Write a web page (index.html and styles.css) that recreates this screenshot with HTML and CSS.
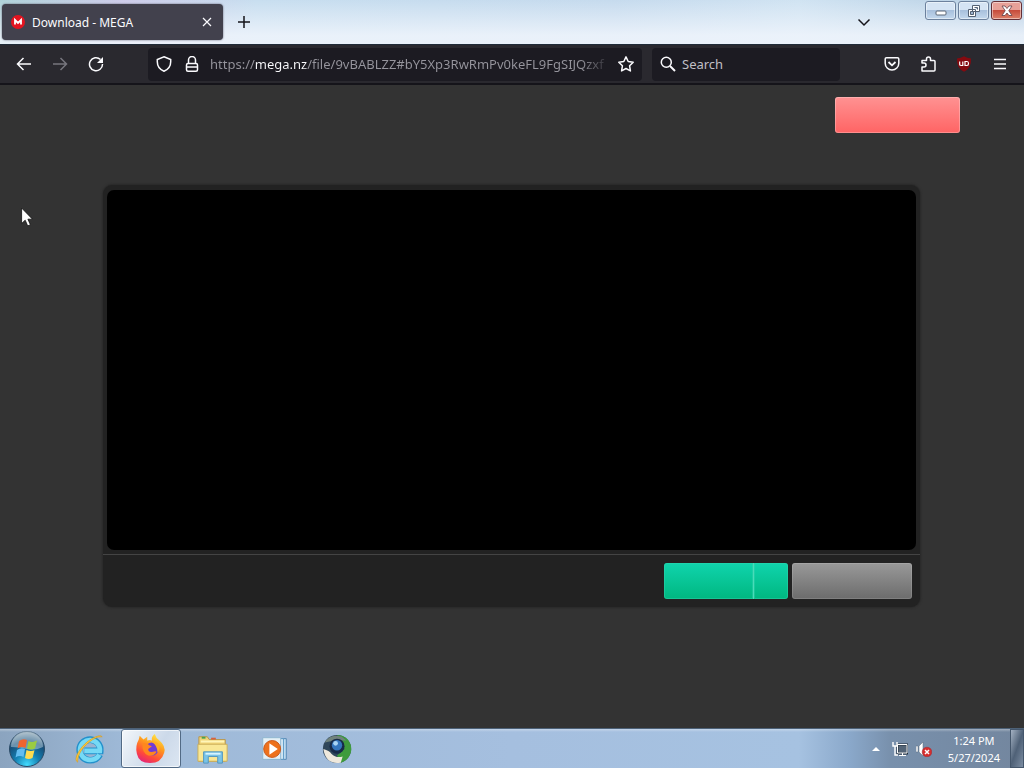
FILE: index.html
```html
<!DOCTYPE html>
<html lang="en">
<head>
<meta charset="utf-8">
<title>Download - MEGA</title>
<link rel="stylesheet" href="styles.css">
</head>
<body>
<header class="titlebar">
  <div class="tab">
    <svg class="favicon" viewBox="0 0 16 16" aria-hidden="true"><circle cx="8" cy="8" r="7" fill="#e31420"/><path d="M5 10.500V6l3 3 3-3v4.500" fill="none" stroke="#fff" stroke-width="1.800"/></svg>
    <span class="tab-title">Download - MEGA</span>
    <button class="plain tab-close" aria-label="Close tab"><svg viewBox="0 0 16 16" class="icon"><path d="M4 4l8 8M12 4l-8 8"/></svg></button>
  </div>
  <button class="plain new-tab" aria-label="New tab"><svg viewBox="0 0 16 16" class="icon dark"><path d="M8 2v12M2 8h12"/></svg></button>
  <button class="plain all-tabs" aria-label="List all tabs"><svg viewBox="0 0 16 16" class="icon dark"><path d="M2.500 5.500L8 11l5.500-5.500"/></svg></button>
  <div class="window-controls">
    <button class="win" aria-label="Minimize"><svg viewBox="0 0 16 12"><rect x="3" y="6" width="10" height="4" rx="1" fill="#fff" stroke="#5b6676"/></svg></button>
    <button class="win" aria-label="Restore"><svg viewBox="0 0 16 12"><path d="M6.500.5h7v6h-7zM2.500 4.500h7v7h-7z" fill="#fff" stroke="#536072"/><path d="M8.500 2.500h3v2M4.500 6.500h3v3h-3z" fill="#9cb4d0" stroke="#536072"/></svg></button>
    <button class="win win-close" aria-label="Close"><svg viewBox="0 0 16 12"><path d="M3 1h3l2 2.500L10 1h3L9.800 5.700 13 10.500h-3L8 8l-2 2.500H3l3.200-4.800z" fill="#fff" stroke="#624047" stroke-width=".8"/></svg></button>
  </div>
</header>

<nav class="toolbar">
  <div class="nav-buttons">
    <button class="plain" aria-label="Back"><svg viewBox="0 0 16 16" class="icon"><path d="M15 8H2M7.500 2L1.500 8l6 6"/></svg></button>
    <button class="plain dim" aria-label="Forward"><svg viewBox="0 0 16 16" class="icon"><path d="M1 8h13M8.500 2l6 6-6 6"/></svg></button>
    <button class="plain" aria-label="Reload"><svg viewBox="0 0 16 16" class="icon"><path d="M12.500 3.500A6.500 6.500 0 1 0 14.500 8"/><path d="M15 1v6H9z" fill="currentColor" stroke="none"/></svg></button>
  </div>
  <div class="field address">
    <svg viewBox="0 0 16 16" class="icon" aria-hidden="true"><path d="M8 .8l6.700 2.700v2.300C14.700 10 12 13.600 8 15.200 4 13.600 1.300 10 1.300 5.800V3.500z"/></svg>
    <svg viewBox="0 0 16 16" class="icon" aria-hidden="true"><rect x="2.500" y="7.500" width="11" height="7.700" rx="1.500"/><path d="M4.500 7.500V4a3.500 3.500 0 0 1 7 0v3.500M3 11h10"/></svg>
    <input class="url" type="text" aria-label="Address" value="https://mega.nz/file/9vBABLZZ#bY5Xp3RwRmPv0keFL9FgSIJQzxf">
    <button class="plain" aria-label="Bookmark this page"><svg viewBox="0 0 16 16" class="icon"><path d="M8 .9l2.200 4.600 5 .7-3.600 3.600.8 5.100L8 12.500l-4.400 2.400.8-5.100L.8 6.200l5-.7z" stroke-linejoin="round"/></svg></button>
  </div>
  <div class="field search-field">
    <svg viewBox="0 0 16 16" class="icon" aria-hidden="true"><circle cx="6.300" cy="6.300" r="5"/><path d="M10 10l5 5" stroke-width="2"/></svg>
    <input class="search" type="text" aria-label="Search" placeholder="Search">
  </div>
  <div class="tools">
    <button class="plain" aria-label="Save to Pocket"><svg viewBox="0 0 16 16" class="icon"><path d="M2.500 1.800h11q1.300 0 1.300 1.300v4.100a6.800 6.800 0 0 1-13.600 0V3.100q0-1.300 1.300-1.300z"/><path d="M4.500 6L8 9.300 11.500 6" stroke-width="1.800"/></svg></button>
    <button class="plain" aria-label="Extensions"><svg viewBox="0 0 16 16" class="icon"><path d="M2 15v-4h2a2 2 0 0 0 0-4H2V4.500h4.500V3a2 2 0 0 1 4 0v1.500H14q1 0 1 1V14q0 1-1 1z" stroke-linejoin="round"/></svg></button>
    <button class="plain" aria-label="uBlock Origin"><svg viewBox="0 0 16 16" class="icon"><path d="M8 .3q3 2 7 2.200Q15.500 12 8 15.800.5 12 1 2.500 5 2.300 8 .3z" fill="#850a10" stroke="none"/><path d="M3.700 5.500v3q0 1 1.500 1h1.600v-4M9 5.500h2q1.500 0 1.500 2t-1.500 2H9z" stroke="#fff" stroke-width="1.200"/></svg></button>
    <button class="plain" aria-label="Open menu"><svg viewBox="0 0 16 16" class="icon"><path d="M2 3.500h12M2 8h12M2 12.500h12"/></svg></button>
  </div>
</nav>

<main class="page">
  <div class="page-top"><button class="action red" aria-label="Create account"></button></div>
  <section class="viewer">
    <div class="preview"></div>
    <div class="viewer-actions">
      <div class="split">
        <button class="action green" aria-label="Download"></button>
        <button class="action green more" aria-label="Download options"></button>
      </div>
      <button class="action grey" aria-label="Import"></button>
    </div>
  </section>
  <svg class="cursor" viewBox="0 0 12 20" aria-hidden="true"><path d="M.6 1v15.500l3.600-3.300 2.500 5.700 2.700-1.200-2.500-5.500h4.600z" fill="#fff" stroke="#111" stroke-width=".8"/></svg>
</main>

<footer class="taskbar">
  <div class="apps">
    <button class="plain app start" aria-label="Start"><svg viewBox="0 0 38 38">
      <defs><radialGradient id="orb" cx=".5" cy=".95" r=".9"><stop offset="0" stop-color="#43dcff"/><stop offset=".4" stop-color="#147fb1"/><stop offset=".75" stop-color="#174e78"/><stop offset="1" stop-color="#869eae"/></radialGradient></defs>
      <circle cx="19" cy="19" r="17.500" fill="url(#orb)" stroke="#2a4a66"/><path d="M3 17a16 16 0 0 1 32 0q-8 4-16 2T3 17z" fill="#d3e3ec" opacity=".45"/>
      <path d="M11 11q4-3 8-1l-1.500 8q-4-2-8 .5z" fill="#ef6530"/><path d="M20.500 11q4 2 8.500-.5l-2 8q-4 2-8 0z" fill="#9acb42"/><path d="M9 20q4-3 8-1l-1.500 8q-4-2-8 .5z" fill="#62bdf0"/><path d="M18.500 20q4 2 8 .3l-2 7.700q-4 2-7.500 0z" fill="#ffdc4f"/></svg></button>
    <button class="plain app" aria-label="Internet Explorer"><svg viewBox="0 0 34 34">
      <path d="M28.500 23q-3 6-10.500 6A11 11 0 1 1 29 19H12" fill="none" stroke="#2291cc" stroke-width="7"/><path d="M28 23q-3 5.500-10 5.500A10.500 10.500 0 1 1 28.500 19H12" fill="none" stroke="#75d9f5" stroke-width="5"/><path d="M5 31C-1 28 9 12 20 6q9-5 11-2-4-1-10 3C11 13 4 24 5 31z" fill="#ffc936" stroke="#d59b24" stroke-width=".7"/></svg></button>
    <button class="plain app active" aria-label="Firefox"><svg viewBox="0 0 34 34">
      <defs><linearGradient id="fox" x1=".8" y1="0" x2=".3" y2="1"><stop offset="0" stop-color="#fff04a"/><stop offset=".4" stop-color="#ff9a1e"/><stop offset=".75" stop-color="#ff493b"/><stop offset="1" stop-color="#e32578"/></linearGradient></defs>
      <path d="M4 7l1-4 4 4 4-3 0 4q3-1 5 0-1-4 3-7 1 4 5 7 7 6 5 13-3 11-15 11T2 22Q0 14 4 7z" fill="url(#fox)"/><circle cx="18" cy="17" r="7" fill="#713cd5"/><path d="M8 11q5-1 7 2l3 1-4 3q0 4 5 3 3-1 4 0-3 5-9 4-7-3-6-13z" fill="#ff871f"/><path d="M17 9q9-1 9 8l-2 4q0-8-7-12z" fill="#ffae22"/></svg></button>
    <button class="plain app" aria-label="Windows Explorer"><svg viewBox="0 0 34 34">
      <path d="M2 4h9l2 3h17v23H2z" fill="#f0d478" stroke="#b8944a"/><path d="M5 5h4" stroke="#48a250" stroke-width="2"/><path d="M15 6h5" stroke="#d8623c" stroke-width="2"/><path d="M4 9h25M4 13h25" stroke="#fff5b8" stroke-width="2"/><path d="M1 12h31v18H1z" fill="#f9e795" stroke="#cbad57"/><path d="M7 32V20h20v12h-5v-7H12v7z" fill="#79c3e7" stroke="#5195be"/><path d="M9 22h16" stroke="#d6f4ff" stroke-width="2"/></svg></button>
    <button class="plain app" aria-label="Windows Media Player"><svg viewBox="0 0 34 34">
      <path d="M15 6h14v22H15z" fill="#bcdaf0" stroke="#5286b2"/><path d="M9 6h17v22H9z" fill="#d4e8f5" stroke="#5c98c4"/><path d="M4 5h19v23H4z" fill="#e4f0f6" stroke="#8db5cf"/><circle cx="14" cy="17" r="9" fill="#ed711c" stroke="#c8571b"/><path d="M11 11l9 6-9 6z" fill="#fff"/></svg></button>
    <button class="plain app" aria-label="Browser"><svg viewBox="0 0 34 34">
      <circle cx="17" cy="17" r="15" fill="#30475a"/><path d="M17 2a15 15 0 0 1 4 29.500L17 24l8-7-4-10z" fill="#3e9b3c"/><path d="M2.500 17Q9 19 11 22q5 5 12 3l-2 6.500Q5 34 2.500 17z" fill="#eee8dc"/><path d="M4 10Q10 0 22 4l5 4H14z" fill="#70827c"/><circle cx="17" cy="14" r="8" fill="#182b48"/><circle cx="17" cy="13" r="5.500" fill="#3475bd"/><circle cx="15.500" cy="11" r="2.500" fill="#a9d4f4"/></svg></button>
  </div>
  <div class="tray">
    <button class="plain tray-item" aria-label="Show hidden icons"><svg viewBox="0 0 16 16"><path d="M4 10l4-4 4 4z" fill="#fff"/></svg></button>
    <button class="plain tray-item" aria-label="Network"><svg viewBox="0 0 16 16"><path d="M5.500 3.500h10v9h-10z" fill="#536477" stroke="#222f3d" stroke-width="2"/><path d="M5.500 3.500h9.500v8.500H5.500zM7 14.500h7M10.500 12v2" fill="none" stroke="#fff"/><path d="M1 1v4h4V1M3 5v9h3" fill="none" stroke="#fff" stroke-width="1.400"/></svg></button>
    <button class="plain tray-item" aria-label="Volume muted"><svg viewBox="0 0 16 16"><path d="M0 5h2v6H0zM3 5l4-4v14l-4-4z" fill="#fff" stroke="#596a7c" stroke-width=".5"/><circle cx="11" cy="11" r="4.800" fill="#d62e2e" stroke="#a52630" stroke-width=".5"/><path d="M9 9l4 4M13 9l-4 4" stroke="#fff" stroke-width="1.500"/></svg></button>
    <div class="clock"><time>1:24 PM</time><time>5/27/2024</time></div>
    <button class="plain show-desktop" aria-label="Show desktop"></button>
  </div>
</footer>
</body>
</html>
```
FILE: styles.css
```css
* { box-sizing: border-box; }
body {
  margin: 0;
  min-height: 100vh;
  display: flex;
  flex-direction: column;
  font-family: "Noto Sans", "Open Sans", sans-serif;
  background: #333;
}
button, input { font: inherit; padding: 0; border: 0; margin: 0; }
svg { display: block; }
.plain { background: none; color: inherit; display: grid; place-items: center; }
.icon { width: 16px; height: 16px; flex: none; fill: none; stroke: currentColor; stroke-width: 1.5; }
.dark { color: #15141a; }

.titlebar {
  height: 44px;
  display: flex;
  align-items: center;
  background: linear-gradient(#ffffff22, #f0f5fcdd 80%), linear-gradient(90deg, #a3ccd4 0, #c6c4e6 12%, #bfd9ed 25%, #bdd5eb 60%, #c9dff0 78%, #aac6de);
}
.tab {
  width: 221px;
  height: 36px;
  margin-left: 2px;
  padding: 0 8px;
  display: flex;
  align-items: center;
  gap: 6px;
  border-radius: 4px;
  background: #42414d;
  color: #fbfbfe;
  font-size: 12px;
  box-shadow: 0 0 2px #555469;
}
.favicon { width: 16px; height: 16px; }
.tab-title { flex: 1; }
.tab-close .icon { stroke-width: 1.2; }
.new-tab { width: 42px; height: 36px; }
.all-tabs { width: 36px; height: 36px; margin-left: auto; margin-right: 43px; }
.window-controls { align-self: flex-start; display: flex; gap: 2px; padding: 1px 2px 0 0; }
.win {
  width: 31px;
  height: 19px;
  display: grid;
  place-items: center;
  border: 1px solid #6c819d;
  border-radius: 3px;
  background: linear-gradient(#d5e4f4 48%, #a8c0dc 50%, #c3d8ed);
  box-shadow: inset 0 0 0 1px #ffffff77;
}
.win svg { width: 16px; height: 12px; }
.win-close { border-color: #642f36; background: linear-gradient(#e7a198 45%, #c64c3c 50%, #dc8069); }

.toolbar {
  height: 41px;
  display: flex;
  align-items: center;
  padding: 0 6px;
  background: #2a292f;
  border-top: 1px solid #202b38;
  border-bottom: 2px solid #15141a;
  color: #fbfbfe;
}
.nav-buttons, .tools { display: flex; }
.nav-buttons .plain, .tools .plain { width: 36px; height: 32px; }
.nav-buttons .dim { color: #77767e; }
.field {
  min-width: 0;
  height: 33px;
  display: flex;
  align-items: center;
  gap: 12px;
  padding: 0 8px;
  border-radius: 4px;
  background: #1c1b22;
}
.address { flex: 1; margin-left: 34px; }
.search-field { flex: 0 1 188px; gap: 6px; margin-left: 10px; }
.field input { flex: 1; min-width: 0; height: 28px; outline: 0; }
.address .url {
  margin-left: -2px;
  margin-right: -4px;
  font-size: 13px;
  color: transparent;
  background: linear-gradient(90deg, #96959d 45px, #fbfbfe 45px 97px, #96959d 97px 370px, #96959d00 402px);
  background-clip: text;
  -webkit-background-clip: text;
}
.search { background: none; color: #fbfbfe; font-size: 13px; }
.search::placeholder { color: #c0bfc5; opacity: 1; }
.tools { margin-left: 34px; }

.page { flex: 1; position: relative; padding: 12px 104px 24px 103px; }
.page-top { display: flex; justify-content: flex-end; height: 88px; margin-right: -40px; }
.action { height: 36px; border-radius: 3px; }
.red { width: 125px; background: linear-gradient(#ff9292, #ff6464); box-shadow: inset 0 0 0 1px #ffffff44; }
.viewer {
  padding: 5px 4px 8px;
  border-radius: 9px;
  background: #222;
  box-shadow: 0 0 2px 1px #292929;
}
.preview { height: 360px; background: #000; border-radius: 7px; }
.viewer-actions {
  display: flex;
  justify-content: flex-end;
  gap: 4px;
  margin: 4px -4px 0;
  padding: 8px 8px 0;
  border-top: 1px solid #444;
}
.split { display: flex; }
.green { width: 89px; background: linear-gradient(#10d4ad, #00b780); box-shadow: inset 0 0 0 1px #39d6b166; }
.split .green { border-radius: 3px 0 0 3px; }
.split .more { width: 35px; border-radius: 0 3px 3px 0; border-left: 1px solid #4adbb9; }
.grey { width: 120px; background: linear-gradient(#999, #6c6c6c); box-shadow: inset 0 0 0 1px #ffffff22; }
.cursor { position: absolute; left: 21px; top: 122px; width: 12px; height: 20px; }

.taskbar {
  height: 40px;
  display: flex;
  justify-content: space-between;
  border-top: 1px solid #4d6177;
  background: linear-gradient(#ffffff55, #fff0 3px), linear-gradient(90deg, #8ba4bf, #9eb9d7 12%, #a5bfdf 50%, #a6c2e1 78%, #8aa8ca 83%, #7890ac 87%, #73869e);
}
.apps, .tray { display: flex; align-items: center; }
.app { width: 62px; height: 39px; }
.app svg { width: 32px; height: 32px; }
.start { width: 58px; padding-right: 4px; }
.start svg { width: 38px; height: 38px; }
.active {
  width: 60px;
  margin: 0 1px;
  border: 1px solid #526a85;
  border-radius: 3px;
  background: linear-gradient(120deg, #f3f7fb, #ccd9e9 60%, #dce6f2);
  box-shadow: inset 0 0 0 1px #ffffffaa;
}
.tray { gap: 8px; color: #fff; }
.tray-item svg { width: 16px; height: 16px; }
.clock { display: flex; flex-direction: column; align-items: center; margin: 0 2px 0 8px; font-size: 11px; line-height: 17px; }
.show-desktop {
  width: 14px;
  height: 39px;
  border: 1px solid #44566b;
  background: linear-gradient(110deg, #a4b2c3, #4f6177 50%, #7c8da2);
}
```
